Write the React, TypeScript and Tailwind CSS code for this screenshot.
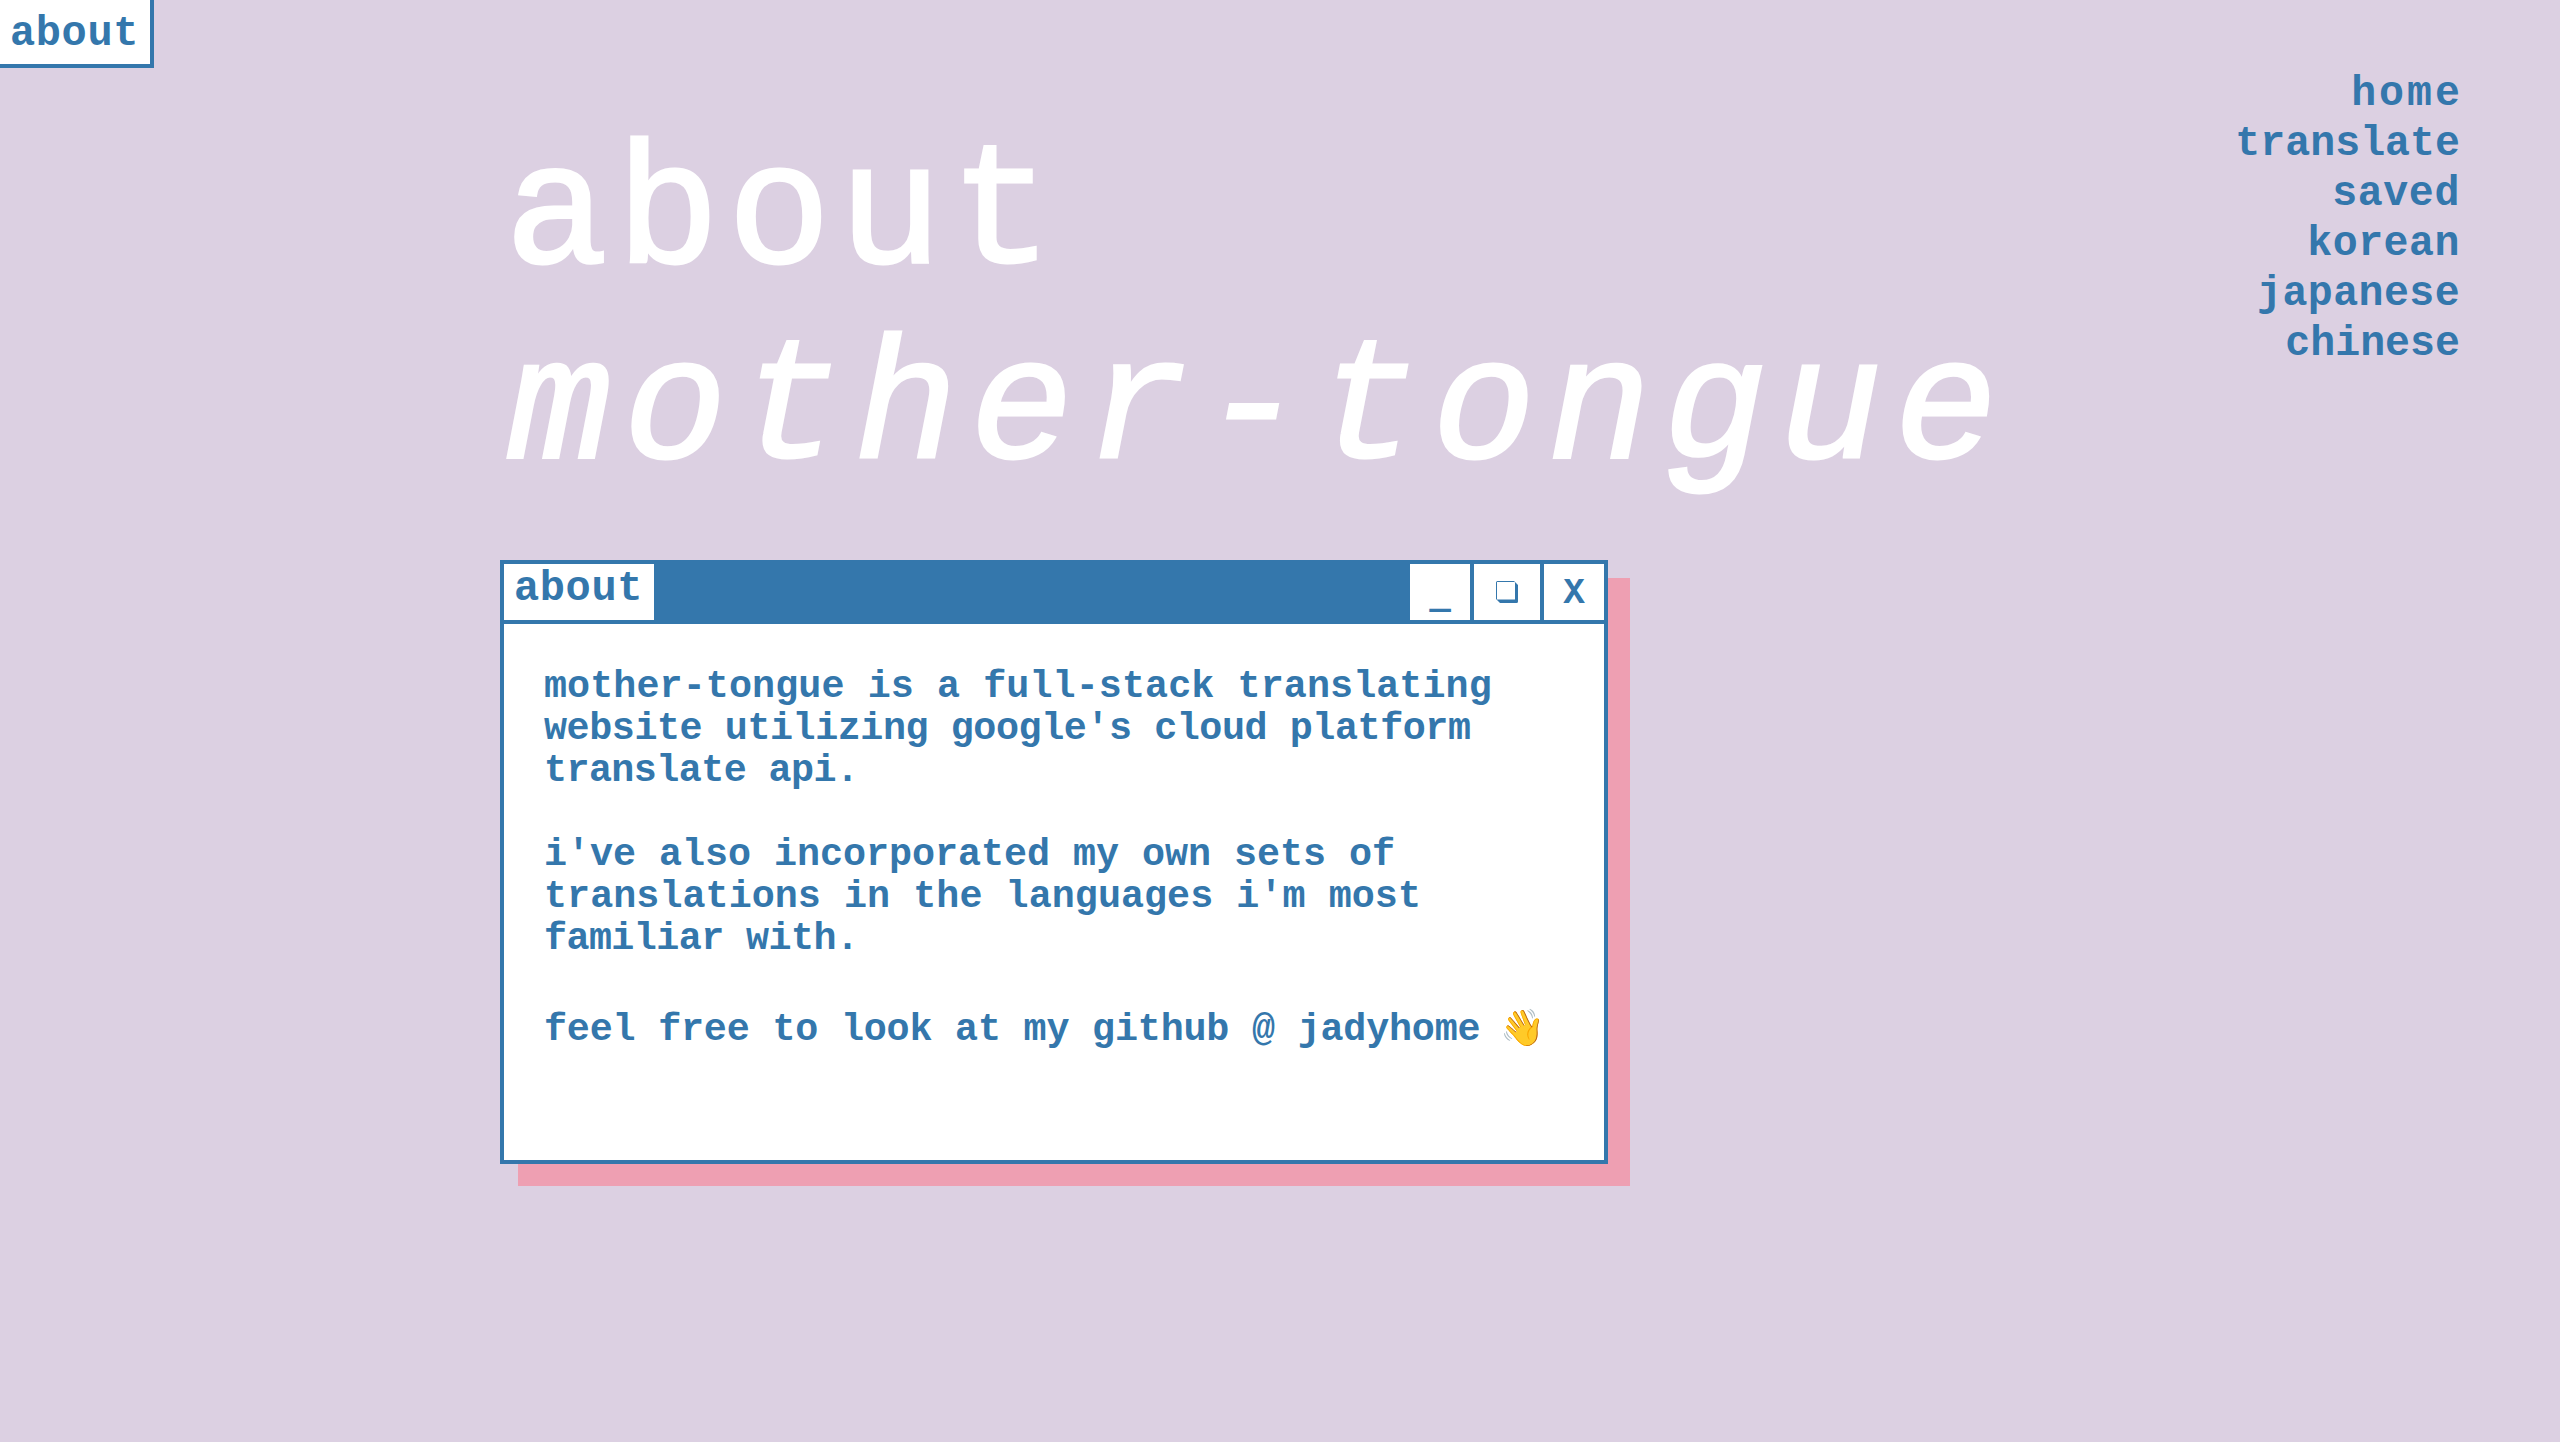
import React from "react";

const mono = "font-['Liberation_Mono','DejaVu_Sans_Mono',monospace]";

const navLinks = [
  { label: "home", className: "tracking-[3px] -mr-[3px]" },
  { label: "translate", className: "tracking-[0px]" },
  { label: "saved", className: "tracking-[0.6px]" },
  { label: "korean", className: "tracking-[0.5px]" },
  { label: "japanese", className: "tracking-[0.4px]" },
  { label: "chinese", className: "tracking-[0px]" },
];

function RestoreIcon() {
  return (
    <svg width="22" height="22" viewBox="0 0 22 22" fill="none">
      <path d="M0 1.5A1.5 1.5 0 0 1 1.5 0H18l4 4v16.5a1.5 1.5 0 0 1-1.5 1.5H4l-4-4z" fill="#3477ac" />
      <path d="M1 1h17.5a.5.5 0 0 1 .5.5V18a.5.5 0 0 1-.5.5H1z" fill="white" />
    </svg>
  );
}

function WindowButton({ children, className }: { children: React.ReactNode; className: string }) {
  return (
    <button className={`h-[56px] bg-white flex items-center justify-center text-[#3477ac] ${className}`}>
      {children}
    </button>
  );
}

export default function App() {
  return (
    <div className={`min-h-[1442px] bg-[#dcd0e2] text-[#3477ac] flex ${mono}`}>
      <div className="w-[500px] shrink-0">
        <a className="block w-[154px] h-[68px] bg-white border-r-4 border-b-4 border-[#3477ac] pl-[10px] pt-[9px] text-[42px] leading-[50px] font-bold tracking-[0.6px]">
          about
        </a>
      </div>

      <main className="flex-1 pt-[119px]">
        <h1 className="pl-[5px] text-white text-[172px] leading-[195px] font-normal tracking-[8px] [-webkit-text-stroke:3px_white]">
          about
        </h1>
        <h1 className="pl-[8px] text-white text-[172px] leading-[195px] font-normal italic tracking-[12.3px] [-webkit-text-stroke:3px_white]">
          mother-tongue
        </h1>

        <section className="mt-[51px] w-[1108px] h-[604px] bg-white border-4 border-[#3477ac] shadow-[20px_20px_0_2px_#ee9fb2]">
          <header className="h-[60px] bg-[#3477ac] flex pb-[4px]">
            <div className="w-[150px] bg-white pl-[10px] pt-[2px] text-[42px] leading-[46px] font-bold tracking-[0.6px]">
              about
            </div>
            <div className="ml-auto flex gap-[4px]">
              <WindowButton className="w-[60px] text-[36px] font-bold font-['DejaVu_Sans_Mono',monospace]">_</WindowButton>
              <WindowButton className="w-[66px]">
                <RestoreIcon />
              </WindowButton>
              <WindowButton className="w-[60px] pt-[3px] text-[36px] font-bold">X</WindowButton>
            </div>
          </header>
          <div className="pl-[40px] pr-[40px] pt-[42px] text-[38.4px] leading-[42px] font-bold">
            <p>
              <span className="tracking-[0.08px]">mother-tongue is a full-stack translating</span>
              <br />
              <span className="tracking-[-0.44px]">website utilizing google's cloud platform</span>
              <br />
              <span className="tracking-[-0.58px]">translate api.</span>
            </p>
            <p className="mt-[42px]">
              <span className="tracking-[-0.04px]">i've also incorporated my own sets of</span>
              <br />
              <span className="tracking-[0.04px]">translations in the languages i'm most</span>
              <br />
              <span className="tracking-[-0.58px]">familiar with.</span>
            </p>
            <p className="mt-[49px] whitespace-nowrap">
              <span className="tracking-[-0.2px]">feel free to look at my github @ jadyhome </span>
              <span className="text-[36px] -ml-[3px]">👋</span>
            </p>
          </div>
        </section>
      </main>

      <nav className="w-[400px] shrink-0 pt-[69px] pr-[100px] text-right text-[41.6px] leading-[50px] font-bold">
        {navLinks.map((link) => (
          <a key={link.label} className={`block ${link.className}`}>
            {link.label}
          </a>
        ))}
      </nav>
    </div>
  );
}
